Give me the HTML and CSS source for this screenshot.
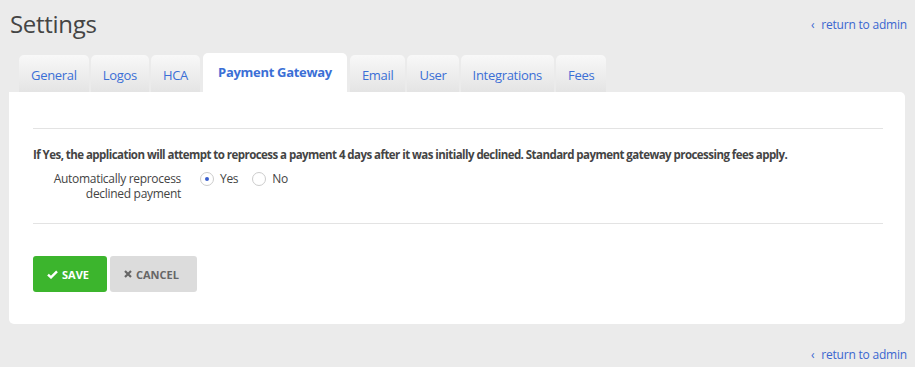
FILE: index.html
```html
<!DOCTYPE html>
<html lang="en">
<head>
    <meta charset="UTF-8">
    <meta name="viewport" content="width=device-width, initial-scale=1.0">
    <title>Settings</title>
    <link rel="stylesheet" href="styles.css">
</head>
<body>

<div class="page-head">
    <h1>Settings</h1>
    <a class="back-link" href="#"><span class="chev">&lsaquo;</span> return to admin</a>
</div>

<ul class="tabs">
    <li><a href="#">General</a></li>
    <li><a href="#">Logos</a></li>
    <li><a href="#">HCA</a></li>
    <li class="active"><a href="#">Payment Gateway</a></li>
    <li><a href="#">Email</a></li>
    <li><a href="#">User</a></li>
    <li><a href="#">Integrations</a></li>
    <li><a href="#">Fees</a></li>
</ul>

<div class="panel">
    <hr class="rule">
    <p class="note">If Yes, the application will attempt to reprocess a payment 4 days after it was initially declined. Standard payment gateway processing fees apply.</p>
    <div class="field">
        <label class="field-label">Automatically reprocess<br>declined payment</label>
        <div class="options">
            <label class="radio"><span class="dot checked"></span> Yes</label>
            <label class="radio"><span class="dot"></span> No</label>
        </div>
    </div>
    <hr class="rule">
    <div class="actions">
        <button class="btn btn-save">
            <svg width="11" height="9" viewBox="0 0 11 9"><path d="M1 4.6 L4 7.4 L10 1.4" fill="none" stroke="#fff" stroke-width="2.4"/></svg>
            SAVE
        </button>
        <button class="btn btn-cancel">
            <svg width="8" height="8" viewBox="0 0 8 8"><path d="M1 1 L7 7 M7 1 L1 7" stroke="#666" stroke-width="2.2"/></svg>
            CANCEL
        </button>
    </div>
</div>

<div class="page-foot">
    <a class="back-link" href="#"><span class="chev">&lsaquo;</span> return to admin</a>
</div>

</body>
</html>
```

FILE: styles.css
```css
body {
    margin: 0;
    font-family: "Open Sans", Arial, sans-serif;
    background: #ebebeb;
    color: #444;
}
a {
    text-decoration: none;
}
.page-head {
    display: flex;
    justify-content: space-between;
    align-items: center;
    padding: 8px 8px 0 10px;
    height: 32px;
}
.page-head h1 {
    margin: 0;
    font-size: 24px;
    font-weight: 400;
    line-height: 32px;
    letter-spacing: -0.3px;
    color: #444;
}
.back-link {
    font-size: 12px;
    color: #3a66d0;
    letter-spacing: -0.2px;
}
.chev {
    font-size: 12px;
    margin-right: 4px;
}
.tabs {
    list-style: none;
    display: flex;
    align-items: flex-end;
    gap: 2px;
    margin: 13px 0 0 19px;
    padding: 0;
    height: 39px;
}
.tabs li {
    height: 37px;
    border-radius: 5px 5px 0 0;
    background: linear-gradient(#f8f8f8, #e4e4e4);
}
.tabs li a {
    display: block;
    padding: 0 12px;
    line-height: 41px;
    font-size: 13px;
    letter-spacing: -0.3px;
    color: #3b6fd6;
}
.tabs li.active {
    height: 39px;
    background: #fff;
    margin: 0 1px;
}
.tabs li.active a {
    padding: 0 15px;
    font-weight: 700;
    line-height: 39px;
}
.panel {
    background: #fff;
    margin: 0 10px 0 9px;
    border-radius: 0 5px 5px 5px;
    padding: 36px 22px 32px 24px;
}
.rule {
    border: 0;
    border-top: 1px solid #e3e3e3;
    margin: 0;
}
.note {
    margin: 17px 0 8px;
    font-size: 11.5px;
    font-weight: 700;
    line-height: 17px;
    letter-spacing: -0.55px;
    color: #444;
}
.field {
    display: flex;
    align-items: flex-start;
    font-size: 12px;
    line-height: 15px;
    letter-spacing: -0.3px;
    margin-bottom: 22px;
}
.field-label {
    width: 148px;
    text-align: right;
}
.options {
    display: flex;
    gap: 14px;
    margin-left: 19px;
}
.radio {
    display: flex;
    align-items: center;
    gap: 6px;
}
.dot {
    width: 14px;
    height: 14px;
    border: 1px solid #ccc;
    border-radius: 50%;
    box-sizing: border-box;
    background: #fff;
    position: relative;
}
.dot.checked::after {
    content: "";
    position: absolute;
    left: 4px;
    top: 4px;
    width: 4px;
    height: 4px;
    border-radius: 50%;
    background: #3a5fcd;
}
.actions {
    display: flex;
    gap: 3px;
    margin-top: 32px;
}
.btn {
    border: none;
    border-radius: 3px;
    height: 36px;
    font-family: "Open Sans", Arial, sans-serif;
    font-size: 11px;
    font-weight: 700;
    display: flex;
    align-items: center;
    gap: 4px;
    cursor: pointer;
}
.btn-save {
    background: #3cb52d;
    color: #fff;
    padding: 0 18px 0 14px;
}
.btn-cancel {
    background: #dcdcdc;
    color: #666;
    padding: 0 18px 0 14px;
}
.page-foot {
    display: flex;
    justify-content: flex-end;
    padding: 22px 8px 0 0;
}
```
